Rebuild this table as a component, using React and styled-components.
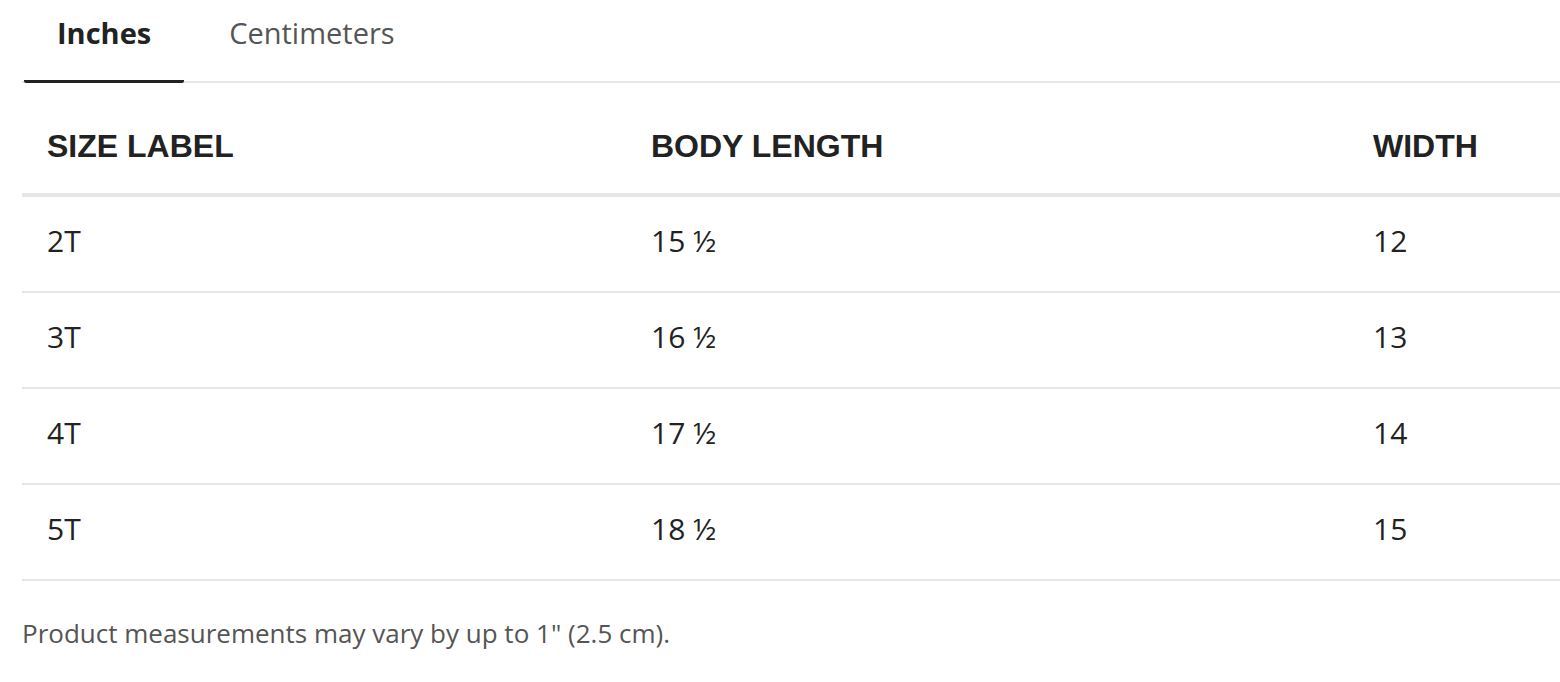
import React, { useState } from "react";
import styled, { createGlobalStyle } from "styled-components";

const GlobalStyle = createGlobalStyle`
  body {
    margin: 0;
    background: #ffffff;
    font-family: "Open Sans", "Liberation Sans", sans-serif;
  }
`;

const Page = styled.div`
  padding-left: 22px;
  width: 1538px;
`;

const TabBar = styled.div`
  display: flex;
  gap: 12px;
  border-bottom: 2px solid #e6e6e6;
`;

const Tab = styled.button`
  box-sizing: border-box;
  height: 83px;
  padding: 0 33px 14px;
  margin: 0 0 -2px ${(p) => (p.first ? "2px" : "0")};
  border: none;
  border-bottom: 3px solid ${(p) => (p.active ? "#222222" : "transparent")};
  border-radius: 2px;
  background: none;
  font-family: "Open Sans", sans-serif;
  font-size: 29px;
  line-height: 40px;
  font-weight: ${(p) => (p.active ? 700 : 400)};
  color: ${(p) => (p.active ? "#222222" : "#555555")};
  cursor: pointer;
`;

const Row = styled.div`
  display: grid;
  grid-template-columns: 604px 722px 1fr;
  border-bottom: ${(p) => (p.head ? "4px solid #e6e6e6" : "2px solid #e6e6e6")};
`;

const HeadCell = styled.div`
  padding: 45px 25px 29px;
  font-family: "Liberation Sans", Arial, sans-serif;
  font-weight: 700;
  font-size: 32px;
  line-height: 36px;
  color: #222222;
`;

const Cell = styled.div`
  padding: 24px 25px 30px;
  font-size: 30px;
  line-height: 40px;
  color: #222222;
`;

const Note = styled.p`
  margin: 34px 0 0;
  font-size: 26px;
  line-height: 36px;
  color: #555555;
`;

const inches = [
  ["2T", "15 ½", "12"],
  ["3T", "16 ½", "13"],
  ["4T", "17 ½", "14"],
  ["5T", "18 ½", "15"],
];

const cm = [
  ["2T", "39.4", "30.5"],
  ["3T", "41.9", "33"],
  ["4T", "44.5", "35.6"],
  ["5T", "47", "38.1"],
];

export default function App() {
  const [unit, setUnit] = useState("in");
  const rows = unit === "in" ? inches : cm;

  return (
    <Page>
      <GlobalStyle />
      <TabBar>
        <Tab first active={unit === "in"} onClick={() => setUnit("in")}>
          Inches
        </Tab>
        <Tab active={unit === "cm"} onClick={() => setUnit("cm")}>
          Centimeters
        </Tab>
      </TabBar>
      <Row head>
        <HeadCell>SIZE LABEL</HeadCell>
        <HeadCell>BODY LENGTH</HeadCell>
        <HeadCell>WIDTH</HeadCell>
      </Row>
      {rows.map((r) => (
        <Row key={r[0]}>
          {r.map((v, i) => (
            <Cell key={i}>{v}</Cell>
          ))}
        </Row>
      ))}
      <Note>Product measurements may vary by up to 1" (2.5 cm).</Note>
    </Page>
  );
}
